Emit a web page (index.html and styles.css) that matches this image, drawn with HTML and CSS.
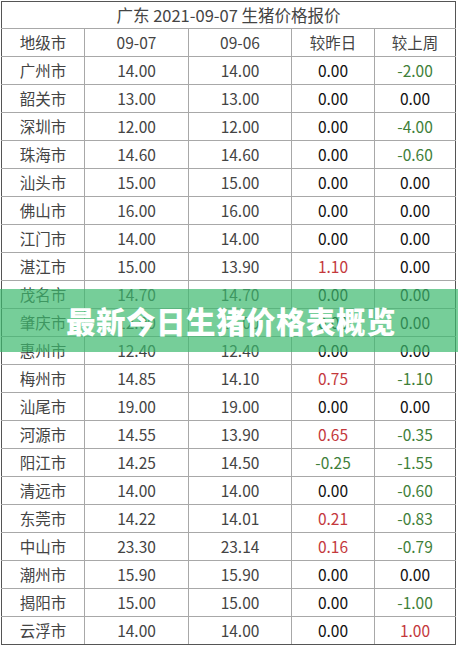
FILE: index.html
```html
<!DOCTYPE html>
<html lang="zh">
<head>
<meta charset="utf-8">
<link rel="stylesheet" href="styles.css">
</head>
<body>
<div class="page">
  <table class="prices">
    <colgroup>
      <col class="c1"><col class="c2"><col class="c3"><col class="c4"><col class="c5">
    </colgroup>
    <tr class="title"><td colspan="5">广东 2021-09-07 生猪价格报价</td></tr>
    <tr class="head"><td>地级市</td><td>09-07</td><td>09-06</td><td>较昨日</td><td>较上周</td></tr>
    <tr><td>广州市</td><td>14.00</td><td>14.00</td><td class="z">0.00</td><td class="dn">-2.00</td></tr>
    <tr><td>韶关市</td><td>13.00</td><td>13.00</td><td class="z">0.00</td><td class="z">0.00</td></tr>
    <tr><td>深圳市</td><td>12.00</td><td>12.00</td><td class="z">0.00</td><td class="dn">-4.00</td></tr>
    <tr><td>珠海市</td><td>14.60</td><td>14.60</td><td class="z">0.00</td><td class="dn">-0.60</td></tr>
    <tr><td>汕头市</td><td>15.00</td><td>15.00</td><td class="z">0.00</td><td class="z">0.00</td></tr>
    <tr><td>佛山市</td><td>16.00</td><td>16.00</td><td class="z">0.00</td><td class="z">0.00</td></tr>
    <tr><td>江门市</td><td>14.00</td><td>14.00</td><td class="z">0.00</td><td class="z">0.00</td></tr>
    <tr><td>湛江市</td><td>15.00</td><td>13.90</td><td class="up">1.10</td><td class="z">0.00</td></tr>
    <tr><td>茂名市</td><td>14.70</td><td>14.70</td><td class="z">0.00</td><td class="z">0.00</td></tr>
    <tr><td>肇庆市</td><td>12.00</td><td>12.00</td><td class="z">0.00</td><td class="z">0.00</td></tr>
    <tr><td>惠州市</td><td>12.40</td><td>12.40</td><td class="z">0.00</td><td class="z">0.00</td></tr>
    <tr><td>梅州市</td><td>14.85</td><td>14.10</td><td class="up">0.75</td><td class="dn">-1.10</td></tr>
    <tr><td>汕尾市</td><td>19.00</td><td>19.00</td><td class="z">0.00</td><td class="z">0.00</td></tr>
    <tr><td>河源市</td><td>14.55</td><td>13.90</td><td class="up">0.65</td><td class="dn">-0.35</td></tr>
    <tr><td>阳江市</td><td>14.25</td><td>14.50</td><td class="dn">-0.25</td><td class="dn">-1.55</td></tr>
    <tr><td>清远市</td><td>14.00</td><td>14.00</td><td class="z">0.00</td><td class="dn">-0.60</td></tr>
    <tr><td>东莞市</td><td>14.22</td><td>14.01</td><td class="up">0.21</td><td class="dn">-0.83</td></tr>
    <tr><td>中山市</td><td>23.30</td><td>23.14</td><td class="up">0.16</td><td class="dn">-0.79</td></tr>
    <tr><td>潮州市</td><td>15.90</td><td>15.90</td><td class="z">0.00</td><td class="z">0.00</td></tr>
    <tr><td>揭阳市</td><td>15.00</td><td>15.00</td><td class="z">0.00</td><td class="dn">-1.00</td></tr>
    <tr><td>云浮市</td><td>14.00</td><td>14.00</td><td class="z">0.00</td><td class="up">1.00</td></tr>
  </table>
  <div class="banner">最新今日生猪价格表概览</div>
</div>
</body>
</html>
```
FILE: styles.css
```css
html, body {
  margin: 0;
  padding: 0;
  background: #ffffff;
}
.page {
  position: relative;
  width: 458px;
  height: 646px;
  padding: 1px 0 0 1px;
  box-sizing: border-box;
  overflow: hidden;
}
.prices {
  border-collapse: collapse;
  table-layout: fixed;
  width: 454px;
  border: 1px solid #555555;
  font-family: "Noto Sans CJK SC", "Noto Sans", sans-serif;
  font-size: 15.5px;
  color: #444444;
}
.c1 { width: 83px; }
.c2 { width: 104px; }
.c3 { width: 103px; }
.c4 { width: 83px; }
.c5 { width: 81px; }
.prices td {
  border: 1px solid #a8a8a8;
  height: 27px;
  padding: 0;
  text-align: center;
  line-height: 27px;
  white-space: nowrap;
}
.prices tr.title td {
  height: 26px;
  line-height: 26px;
  font-size: 16.5px;
  border-top-color: #555555;
}
.prices td:first-child { border-left-color: #555555; }
.prices td:last-child { border-right-color: #555555; }
.prices tr:last-child td { border-bottom-color: #555555; }
.prices td.z { color: #111111; }
.prices td.dn { color: #3f7f3a; }
.prices td.up { color: #c4383c; }
.banner {
  position: absolute;
  left: 0;
  top: 289px;
  width: 458px;
  height: 63px;
  background: rgba(60, 185, 110, 0.7);
  box-sizing: border-box;
  padding-left: 66px;
  font-family: "Noto Sans CJK SC", sans-serif;
  font-weight: 900;
  font-size: 29.5px;
  line-height: 63px;
  color: #ffffff;
  letter-spacing: 0.5px;
}
```
